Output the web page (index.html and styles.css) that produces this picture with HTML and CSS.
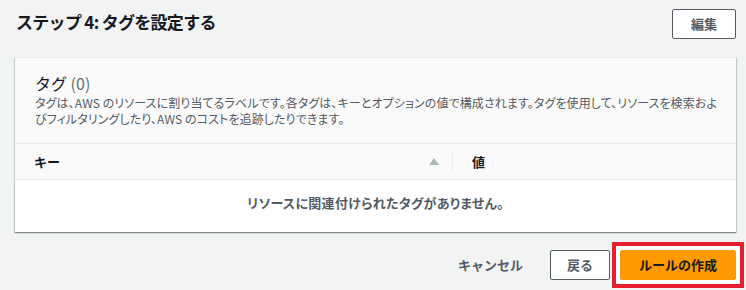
FILE: index.html
```html
<!DOCTYPE html>
<html lang="ja">
<head>
  <meta charset="UTF-8">
  <meta name="viewport" content="width=device-width, initial-scale=1.0">
  <title>ステップ 4: タグを設定する</title>
  <link rel="stylesheet" href="styles.css">
</head>
<body>
  <div class="page">
    <div class="step-head">
      <h2>ステップ 4: タグを設定する</h2>
      <button class="btn">編集</button>
    </div>
    <div class="card">
      <div class="card-head">
        <h3>タグ <span class="count">(0)</span></h3>
        <p>タグは、AWS のリソースに割り当てるラベルです。各タグは、キーとオプションの値で構成されます。タグを使用して、リソースを検索およびフィルタリングしたり、AWS のコストを追跡したりできます。</p>
      </div>
      <div class="thead">
        <div class="col col-key">
          <span>キー</span>
          <i class="sort"></i>
        </div>
        <div class="col col-val"><span>値</span></div>
      </div>
      <div class="empty">リソースに関連付けられたタグがありません。</div>
    </div>
    <div class="actions">
      <button class="btn btn-link">キャンセル</button>
      <button class="btn btn-back">戻る</button>
      <span class="mark">
        <button class="btn btn-primary">ルールの作成</button>
      </span>
    </div>
  </div>
</body>
</html>
```

FILE: styles.css
```css
*{
  margin: 0;
  padding: 0;
  box-sizing: border-box;
}
body{
  background-color: #f2f3f3;
  font-family: "Noto Sans CJK JP", "Noto Sans", sans-serif;
  color: #16191f;
  width: 746px;
  height: 290px;
  overflow: hidden;
}
.page{
  padding: 0 10px 0 15px;
}
.step-head{
  display: flex;
  justify-content: space-between;
  align-items: flex-start;
  padding: 9px 0 0 1px;
  height: 57px;
}
.step-head h2{
  font-size: 17px;
  font-weight: bold;
  line-height: 26px;
  letter-spacing: -0.7px;
}
.btn{
  font-family: "Noto Sans CJK JP", "Noto Sans", sans-serif;
  font-size: 13px;
  font-weight: bold;
  color: #545b64;
  background-color: #fff;
  border: 1px solid #545b64;
  border-radius: 2px;
  height: 30px;
  line-height: 28px;
  padding: 0 19px;
  cursor: pointer;
}
.step-head .btn{
  width: 64px;
  padding: 0;
}
.card{
  background-color: #fff;
  box-shadow: 0 1px 1px 0 rgba(0,28,36,.3), 1px 1px 1px 0 rgba(0,28,36,.15), -1px 1px 1px 0 rgba(0,28,36,.15);
  border-top: 1px solid #eaeded;
}
.card-head{
  background-color: #fafafa;
  padding: 13px 12px 0 20px;
  height: 86px;
  border-bottom: 1px solid #eaeded;
}
.card-head h3{
  font-size: 16px;
  font-weight: normal;
  line-height: 24px;
}
.card-head h3 .count{
  color: #687078;
}
.card-head p{
  font-size: 12px;
  line-height: 16px;
  color: #545b64;
  font-feature-settings: "palt";
  letter-spacing: 0.1px;
}
.thead{
  display: flex;
  align-items: center;
  height: 36px;
  background-color: #fafafa;
  border-bottom: 1px solid #eaeded;
  font-size: 13px;
  font-weight: bold;
  color: #16191f;
}
.col{
  display: flex;
  align-items: center;
}
.col-key{
  width: 438px;
  height: 18px;
  padding: 0 13px 0 19px;
  justify-content: space-between;
  border-right: 1px solid #eaeded;
}
.sort{
  width: 0;
  height: 0;
  border-left: 5px solid transparent;
  border-right: 5px solid transparent;
  border-bottom: 7px solid #aab7b8;
}
.col-val{
  padding-left: 19px;
}
.empty{
  height: 52px;
  line-height: 46px;
  text-align: center;
  font-size: 13px;
  font-weight: bold;
  color: #545b64;
  font-feature-settings: "palt";
  letter-spacing: 0.3px;
}
.actions{
  display: flex;
  justify-content: flex-end;
  align-items: center;
  margin-top: 10px;
  margin-right: -8px;
  gap: 2px;
}
.btn-link{
  border-color: transparent;
  background: transparent;
  padding: 0 20px;
  margin-right: 4px;
}
.btn-back{
  width: 60px;
  padding: 0;
}
.mark{
  display: block;
  border: 4px solid #e5202e;
  padding: 4px;
  background-color: #fff;
}
.btn-primary{
  display: block;
  width: 116px;
  padding: 0;
  background-color: #ff9900;
  border-color: #ff9900;
  color: #16191f;
}
```
